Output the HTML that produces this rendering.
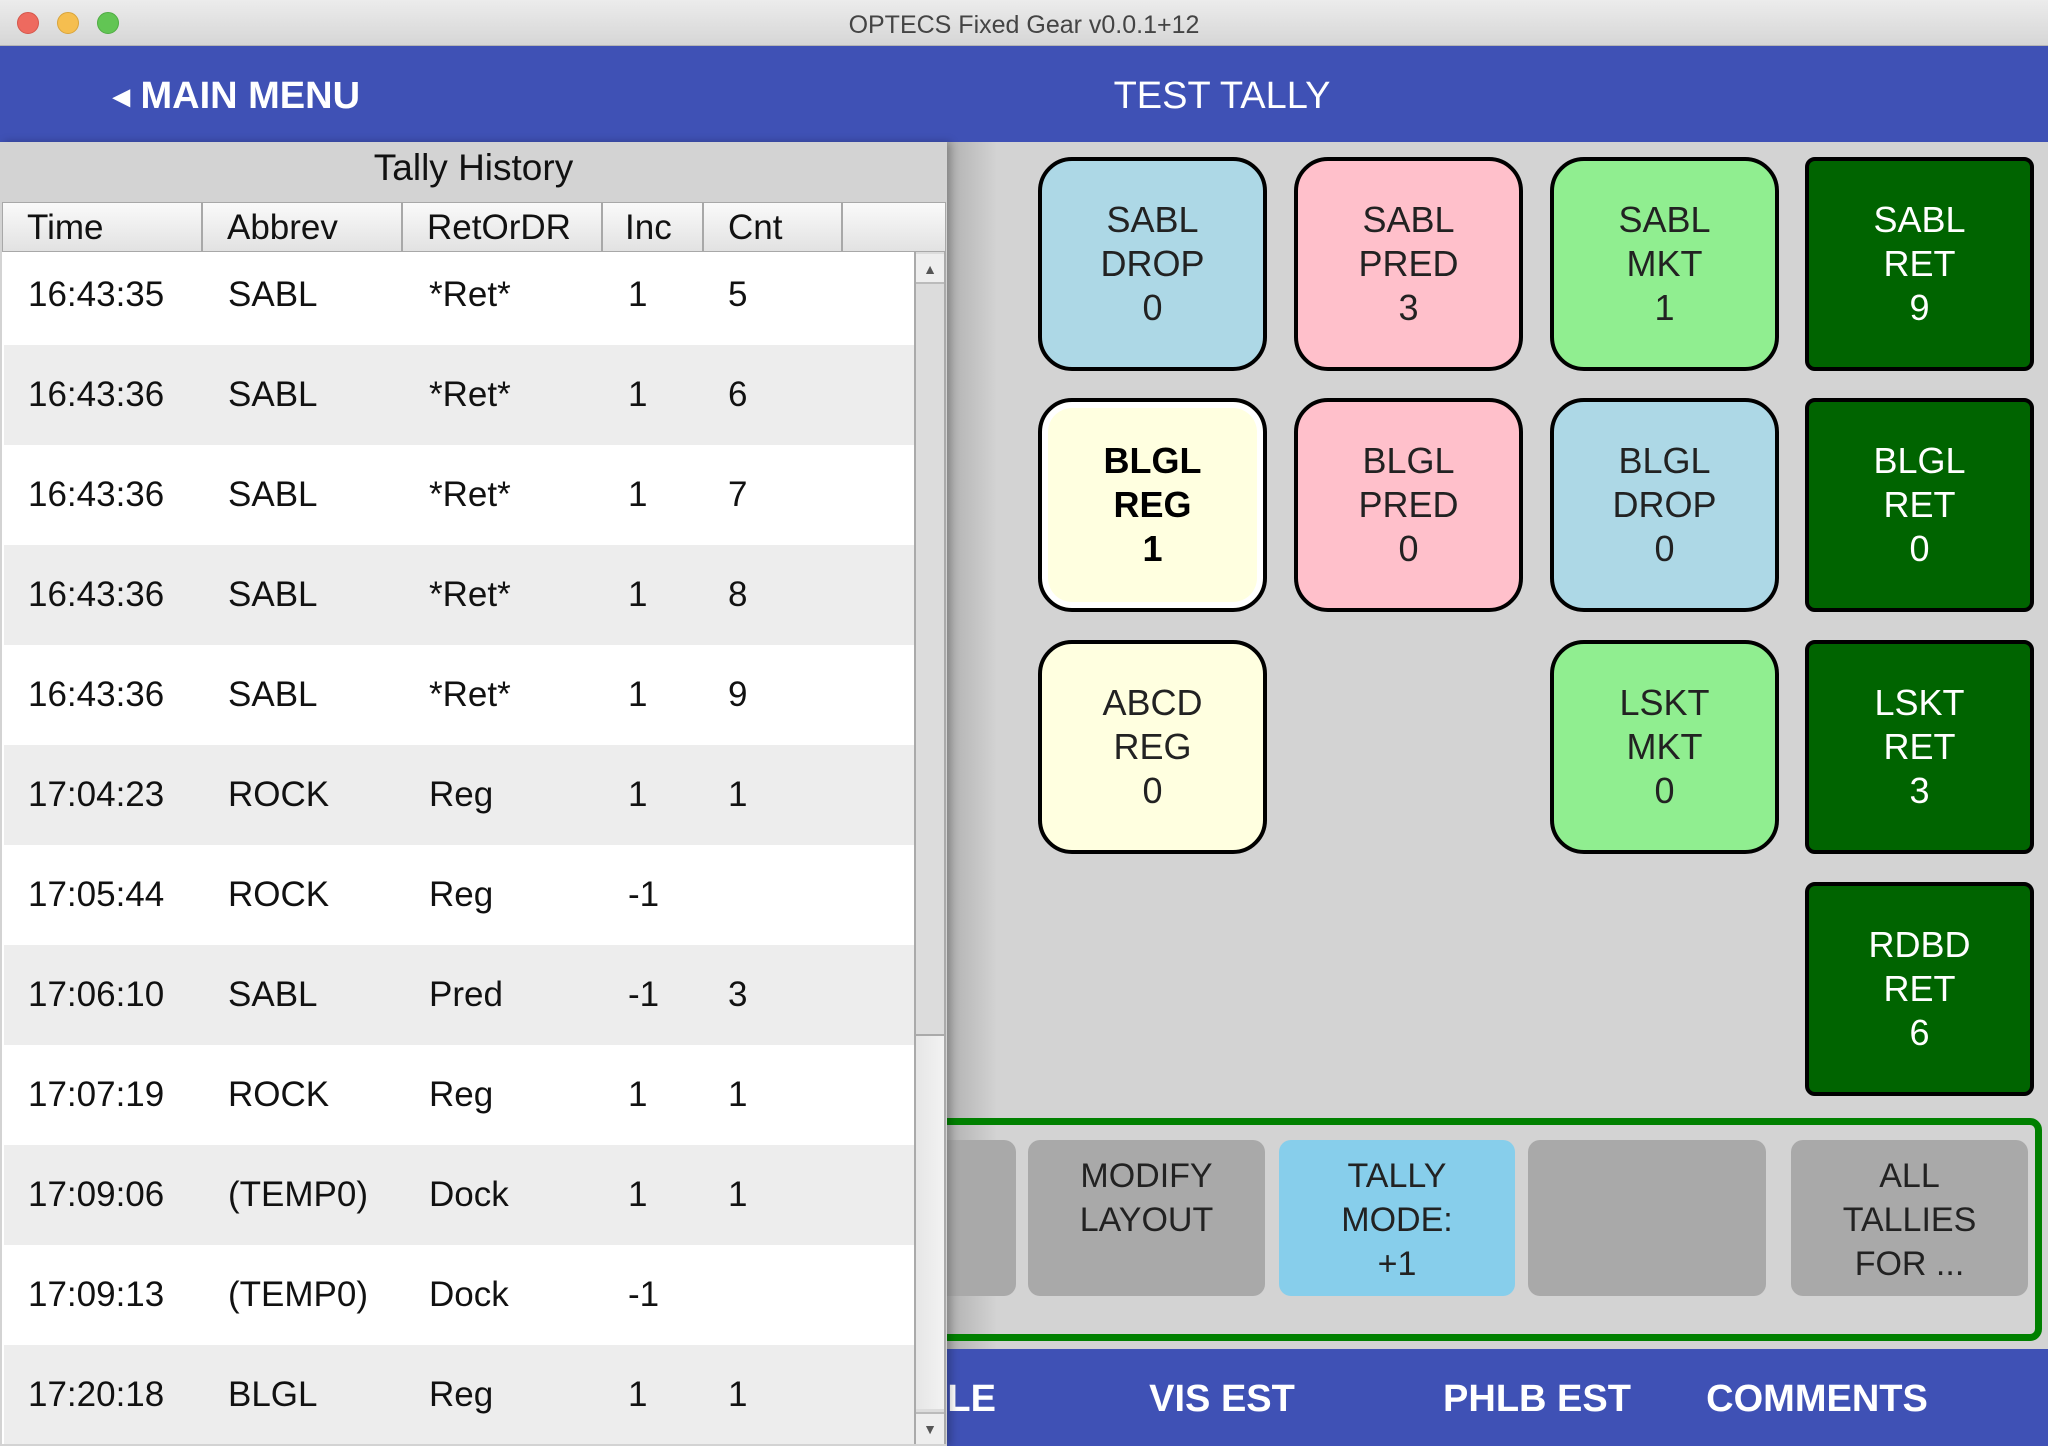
<!DOCTYPE html>
<html><head><meta charset="utf-8"><style>
*{margin:0;padding:0;box-sizing:border-box}
body{width:2048px;height:1446px;overflow:hidden;position:relative;background:#d3d3d3;font-family:"Liberation Sans",sans-serif;color:#111}
.abs{position:absolute}
#tb{left:0;top:0;width:2048px;height:46px;background:linear-gradient(#ececec,#d6d6d6);border-bottom:1px solid #b5b5b5;text-align:center;font-size:25px;line-height:50px;color:#444}
.dot{position:absolute;top:12px;width:22px;height:22px;border-radius:50%}
#hdr{left:0;top:46px;width:2048px;height:96px;background:#3f51b5;color:#fff}
#nav{left:0;top:1349px;width:2048px;height:97px;background:#3f51b5;color:#fff;font-weight:bold;font-size:38px}
#nav span{position:absolute;top:29px;transform:translateX(-50%);white-space:nowrap}
#right{left:947px;top:142px;width:1101px;height:1207px;background:linear-gradient(90deg,#b0b0b0,#d3d3d3 50px)}
.tile{position:absolute;width:229px;height:214px;border:4px solid #000;border-radius:34px;display:flex;align-items:center;justify-content:center;text-align:center;font-size:36px;line-height:44px;color:#222}
.dk{background:#006400;color:#fff;border-radius:10px}
.btn{position:absolute;top:1140px;height:156px;border-radius:12px;background:#a9a9a9;text-align:center;font-size:34px;line-height:44px;padding-top:14px;color:#222}
#left{left:0;top:142px;width:947px;height:1304px;background:#d3d3d3;box-shadow:4px 0 8px rgba(0,0,0,.25)}
.th{position:absolute;top:202px;height:50px;background:linear-gradient(#fafafa,#e2e2e2);border:1px solid #a8a8a8;font-size:35px;line-height:50px;padding-left:24px}
.row{position:absolute;left:2px;width:912px;height:100px;font-size:35px;line-height:100px}
.row span{position:absolute}
</style></head><body>
<div id="tb" class="abs">OPTECS Fixed Gear v0.0.1+12
<div class="dot" style="left:17px;background:#ee6a5f;border:1px solid #d5564b"></div>
<div class="dot" style="left:57px;background:#f5be4f;border:1px solid #d9a43a"></div>
<div class="dot" style="left:97px;background:#62c554;border:1px solid #4fac43"></div>
</div>
<div id="hdr" class="abs">
<div class="abs" style="left:113px;top:22px;font-size:38px;font-weight:bold;line-height:56px"><span style="font-size:22px;vertical-align:4px">◀</span> MAIN MENU</div>
<div class="abs" style="left:1222px;top:22px;transform:translateX(-50%);font-size:38px;line-height:56px;white-space:nowrap">TEST TALLY</div>
</div>
<div id="nav" class="abs">
<span style="left:959px">PLE</span>
<span style="left:1222px">VIS EST</span>
<span style="left:1537px">PHLB EST</span>
<span style="left:1817px">COMMENTS</span>
</div>
<div id="right" class="abs"></div>

<div class="tile" style="left:1038px;top:157px;background:#add8e6">SABL<br>DROP<br>0</div>
<div class="tile" style="left:1294px;top:157px;background:#ffc0cb">SABL<br>PRED<br>3</div>
<div class="tile" style="left:1550px;top:157px;background:#90ee90">SABL<br>MKT<br>1</div>
<div class="tile dk" style="left:1805px;top:157px">SABL<br>RET<br>9</div>
<div class="tile" style="left:1038px;top:398px;background:#ffffe0;box-shadow:inset 0 0 0 6px #fff;font-weight:bold;color:#000">BLGL<br>REG<br>1</div>
<div class="tile" style="left:1294px;top:398px;background:#ffc0cb">BLGL<br>PRED<br>0</div>
<div class="tile" style="left:1550px;top:398px;background:#add8e6">BLGL<br>DROP<br>0</div>
<div class="tile dk" style="left:1805px;top:398px">BLGL<br>RET<br>0</div>
<div class="tile" style="left:1038px;top:640px;background:#ffffe0">ABCD<br>REG<br>0</div>
<div class="tile" style="left:1550px;top:640px;background:#90ee90">LSKT<br>MKT<br>0</div>
<div class="tile dk" style="left:1805px;top:640px">LSKT<br>RET<br>3</div>
<div class="tile dk" style="left:1805px;top:882px">RDBD<br>RET<br>6</div>

<div class="abs" style="left:900px;top:1118px;width:1142px;height:223px;border:7px solid #008000;border-radius:0 12px 12px 0"></div>
<div class="btn" style="left:920px;width:96px"></div>
<div class="btn" style="left:1028px;width:237px">MODIFY<br>LAYOUT</div>
<div class="btn" style="left:1279px;width:236px;background:#87ceeb">TALLY<br>MODE:<br>+1</div>
<div class="btn" style="left:1528px;width:238px"></div>
<div class="btn" style="left:1791px;width:237px">ALL<br>TALLIES<br>FOR ...</div>

<div id="left" class="abs">
<div class="abs" style="left:0;top:0;width:947px;height:60px;text-align:center;font-size:37px;line-height:52px">Tally History</div>
</div>
<div class="th" style="left:2px;width:200px">Time</div>
<div class="th" style="left:202px;width:200px">Abbrev</div>
<div class="th" style="left:402px;width:200px">RetOrDR</div>
<div class="th" style="left:602px;width:101px;padding-left:22px">Inc</div>
<div class="th" style="left:703px;width:139px">Cnt</div>
<div class="th" style="left:842px;width:104px"></div>
<div class="abs" style="left:2px;top:252px;width:944px;height:1192px;overflow:hidden;background:#fff">
<div style="position:relative;top:-7px">
<div class="row" style="top:0;background:#fff"><span style="left:24px">16:43:35</span><span style="left:224px">SABL</span><span style="left:425px">*Ret*</span><span style="left:624px">1</span><span style="left:724px">5</span></div>
<div class="row" style="top:100px;background:#ededed"><span style="left:24px">16:43:36</span><span style="left:224px">SABL</span><span style="left:425px">*Ret*</span><span style="left:624px">1</span><span style="left:724px">6</span></div>
<div class="row" style="top:200px;background:#fff"><span style="left:24px">16:43:36</span><span style="left:224px">SABL</span><span style="left:425px">*Ret*</span><span style="left:624px">1</span><span style="left:724px">7</span></div>
<div class="row" style="top:300px;background:#ededed"><span style="left:24px">16:43:36</span><span style="left:224px">SABL</span><span style="left:425px">*Ret*</span><span style="left:624px">1</span><span style="left:724px">8</span></div>
<div class="row" style="top:400px;background:#fff"><span style="left:24px">16:43:36</span><span style="left:224px">SABL</span><span style="left:425px">*Ret*</span><span style="left:624px">1</span><span style="left:724px">9</span></div>
<div class="row" style="top:500px;background:#ededed"><span style="left:24px">17:04:23</span><span style="left:224px">ROCK</span><span style="left:425px">Reg</span><span style="left:624px">1</span><span style="left:724px">1</span></div>
<div class="row" style="top:600px;background:#fff"><span style="left:24px">17:05:44</span><span style="left:224px">ROCK</span><span style="left:425px">Reg</span><span style="left:624px">-1</span></div>
<div class="row" style="top:700px;background:#ededed"><span style="left:24px">17:06:10</span><span style="left:224px">SABL</span><span style="left:425px">Pred</span><span style="left:624px">-1</span><span style="left:724px">3</span></div>
<div class="row" style="top:800px;background:#fff"><span style="left:24px">17:07:19</span><span style="left:224px">ROCK</span><span style="left:425px">Reg</span><span style="left:624px">1</span><span style="left:724px">1</span></div>
<div class="row" style="top:900px;background:#ededed"><span style="left:24px">17:09:06</span><span style="left:224px">(TEMP0)</span><span style="left:425px">Dock</span><span style="left:624px">1</span><span style="left:724px">1</span></div>
<div class="row" style="top:1000px;background:#fff"><span style="left:24px">17:09:13</span><span style="left:224px">(TEMP0)</span><span style="left:425px">Dock</span><span style="left:624px">-1</span></div>
<div class="row" style="top:1100px;background:#ededed"><span style="left:24px">17:20:18</span><span style="left:224px">BLGL</span><span style="left:425px">Reg</span><span style="left:624px">1</span><span style="left:724px">1</span></div>
</div>
<div class="abs" style="left:912px;top:0;width:32px;height:1192px;background:#dcdcdc;border-left:2px solid #aaa;border-right:2px solid #aaa"></div>
<div class="abs" style="left:914px;top:2px;width:28px;height:30px;background:#eee;border-bottom:2px solid #bbb;text-align:center;font-size:14px;line-height:30px;color:#555">▲</div>
<div class="abs" style="left:914px;top:782px;width:28px;height:375px;background:linear-gradient(90deg,#e6e6e6,#f2f2f2);border-top:2px solid #aaa"></div>
<div class="abs" style="left:914px;top:1160px;width:28px;height:32px;background:#eee;border-top:2px solid #bbb;text-align:center;font-size:14px;line-height:30px;color:#555">▼</div>
</div>
</body></html>
